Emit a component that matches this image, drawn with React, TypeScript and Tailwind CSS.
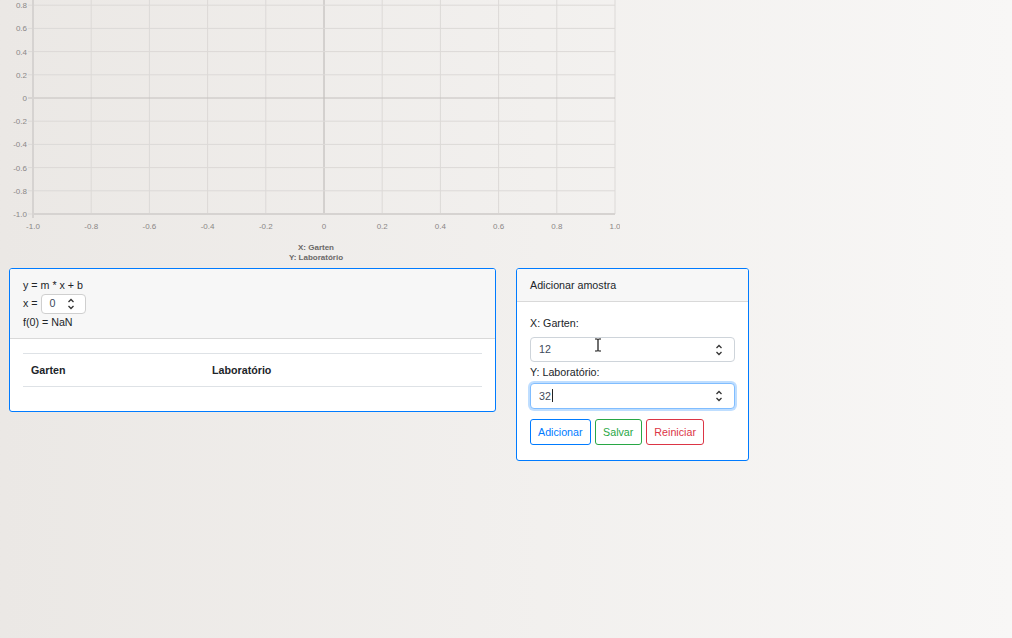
import React from 'react';

const X0 = 33;
const X1 = 615;
const yOf = (v: number) => 98 - v * 116;
const xOf = (v: number) => X0 + ((v + 1) / 2) * (X1 - X0);

const ticks = [-1, -0.8, -0.6, -0.4, -0.2, 0, 0.2, 0.4, 0.6, 0.8, 1];
const fmt = (v: number) => (v === 0 ? '0' : v.toFixed(1));

const Chart: React.FC = () => (
  <svg width={620} height={262} className="block" style={{ fontFamily: '"Liberation Sans", Arial, sans-serif' }}>
    {ticks.map((t) => (
      <line key={'v' + t} x1={xOf(t)} x2={xOf(t)} y1={0} y2={yOf(-1)} stroke={t === 0 ? '#b8b4b2' : '#dcd9d7'} strokeWidth={1} />
    ))}
    {ticks.map((t) => (
      <line key={'h' + t} x1={X0 - 5} x2={X1} y1={yOf(t)} y2={yOf(t)} stroke={t === 0 ? '#c4c0be' : '#dcd9d7'} strokeWidth={1} />
    ))}
    <line x1={X0} x2={X0} y1={0} y2={yOf(-1) + 4} stroke="#d6d3d1" strokeWidth={2} />
    <line x1={X0} x2={X1} y1={yOf(-1)} y2={yOf(-1)} stroke="#d6d3d1" strokeWidth={2} />
    {/* the 1.0 label sits above the visible area */}
    {ticks.filter((t) => t < 1).map((t) => (
      <text key={'yl' + t} x={27} y={yOf(t) + 3} textAnchor="end" fontSize={8} fill="#8a8786">
        {fmt(t)}
      </text>
    ))}
    {ticks.map((t) => (
      <text key={'xl' + t} x={xOf(t)} y={229} textAnchor="middle" fontSize={8} fill="#8a8786">
        {fmt(t)}
      </text>
    ))}
    <text x={316} y={250} textAnchor="middle" fontSize={8} fontWeight="bold" fill="#6b6867">X: Garten</text>
    <text x={316} y={260} textAnchor="middle" fontSize={8} fontWeight="bold" fill="#6b6867">Y: Laboratório</text>
  </svg>
);

const Spinner: React.FC = () => (
  <svg width={8} height={14} viewBox="0 0 8 14" className="shrink-0">
    <path d="M1.5 5 L4 2.5 L6.5 5" fill="none" stroke="#333" strokeWidth={1.3} />
    <path d="M1.5 9 L4 11.5 L6.5 9" fill="none" stroke="#333" strokeWidth={1.3} />
  </svg>
);

const App: React.FC = () => {
  return (
    <div
      className="relative min-h-screen w-full bg-gradient-to-r from-[#ebe8e5] to-[#f8f7f6] text-[10.7px] text-[#212529]"
      style={{ fontFamily: '"Liberation Sans", Arial, sans-serif' }}
    >
      <Chart />

      <div className="flex items-start gap-[20px] pl-[9px] pt-[6px]">
        {/* equation card */}
        <div className="w-[487px] overflow-hidden rounded-[3px] border border-[#007bff] bg-white">
          <div className="border-b border-[#d9d9d9] bg-[#f7f7f7] px-[13px] py-[8px]">
            <div className="h-[16px] leading-[16px]">y = m * x + b</div>
            <div className="flex h-[21px] items-center">
              <span>x =&nbsp;</span>
              <div className="flex h-[20px] w-[45px] items-center justify-between rounded-[4px] border border-[#cfcfcf] bg-white pl-[8px] pr-[10px] text-[#3d4a5c]">
                <span>0</span>
                <Spinner />
              </div>
            </div>
            <div className="h-[16px] leading-[16px]">f(0) = NaN</div>
          </div>
          <div className="px-[13px] pt-[14px] pb-[24px]">
            <div className="flex h-[34px] items-center border-y border-[#dee2e6] font-bold">
              <div className="w-[189px] pl-[8px]">Garten</div>
              <div>Laboratório</div>
            </div>
          </div>
        </div>

        {/* add sample card */}
        <div className="w-[233px] overflow-hidden rounded-[3px] border border-[#007bff] bg-white">
          <div className="flex h-[33px] items-center border-b border-[#d9d9d9] bg-[#f7f7f7] px-[13px]">
            Adicionar amostra
          </div>
          <div className="px-[13px] pt-[13px] pb-[15px]">
            <div className="h-[16px] leading-[16px]">X: Garten:</div>
            <div className="mt-[6px] flex h-[25px] items-center justify-between rounded-[4px] border border-[#ced4da] bg-white pl-[8px] pr-[11px] text-[#3d4a5c]">
              <span>12</span>
              <Spinner />
            </div>
            <div className="mt-[1px] h-[20px] leading-[18px]">Y: Laboratório:</div>
            <div className="flex h-[26px] items-center justify-between rounded-[4px] border border-[#80bdff] bg-white pl-[8px] pr-[11px] text-[#3d4a5c] shadow-[0_0_0_2px_rgba(0,123,255,0.25)]">
              <span className="flex items-center">
                32<span className="ml-[1px] inline-block h-[13px] w-px bg-[#222]" />
              </span>
              <Spinner />
            </div>
            <div className="mt-[10px] flex gap-[4px]">
              <button className="h-[26px] rounded-[3px] border border-[#007bff] px-[7px] text-[#007bff]">Adicionar</button>
              <button className="h-[26px] rounded-[3px] border border-[#28a745] px-[7.5px] text-[#28a745]">Salvar</button>
              <button className="h-[26px] rounded-[3px] border border-[#dc3545] px-[7.5px] text-[#dc3545]">Reiniciar</button>
            </div>
          </div>
        </div>
      </div>

      {/* mouse text cursor */}
      <svg width={8} height={14} viewBox="0 0 8 14" className="absolute left-[594px] top-[338px]">
        <path d="M1 1 H3 M5 1 H7 M4 1.5 V12.5 M1 13 H3 M5 13 H7" fill="none" stroke="#111" strokeWidth={1.2} />
        <path d="M3 1 Q4 1.5 5 1 M3 13 Q4 12.5 5 13" fill="none" stroke="#111" strokeWidth={1.2} />
      </svg>
    </div>
  );
};

export default App;
